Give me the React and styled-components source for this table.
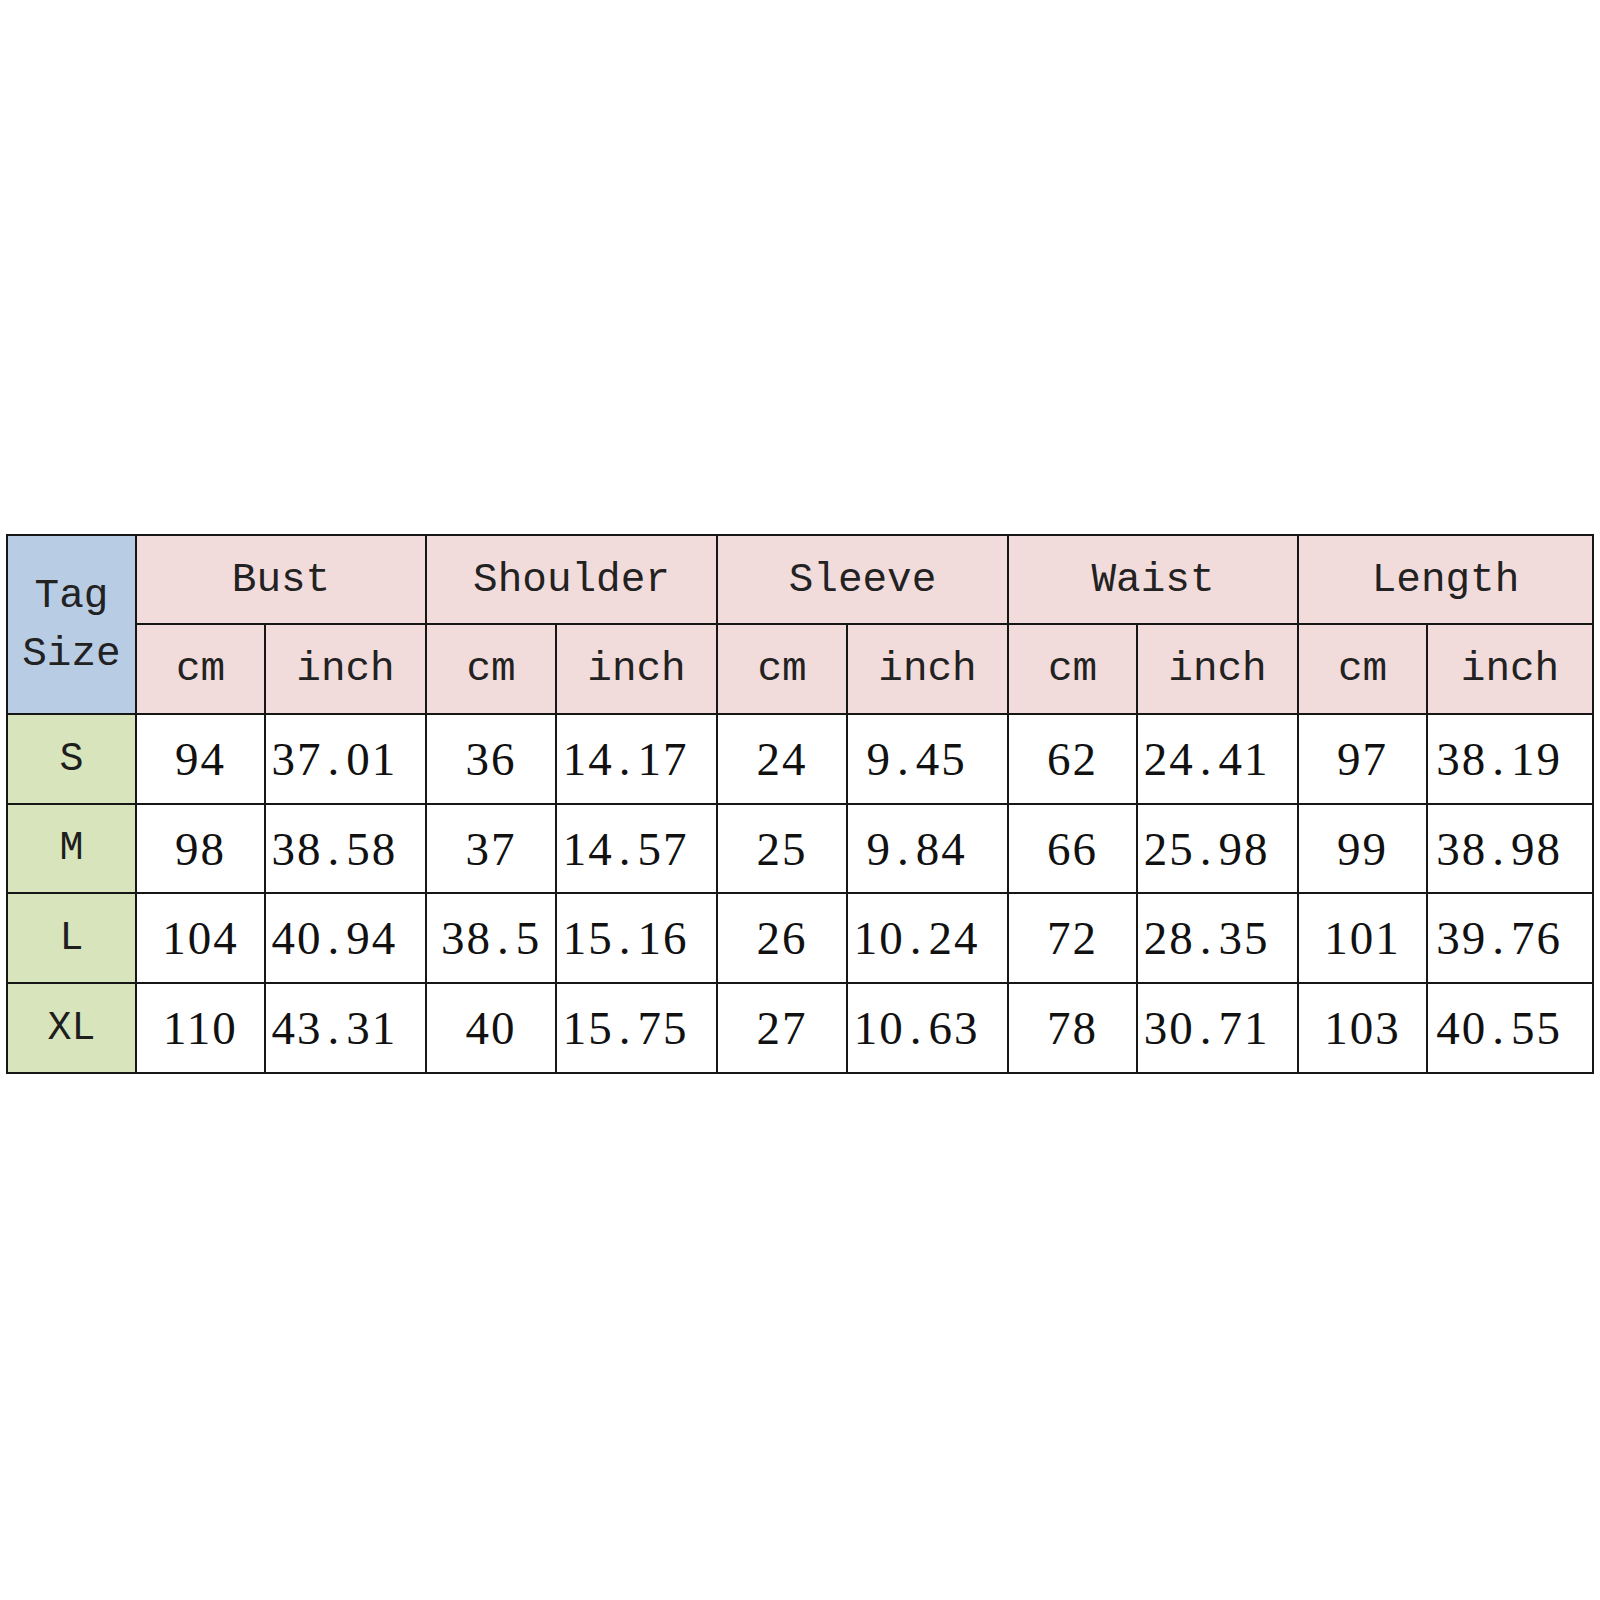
import React from 'react';
import styled, { createGlobalStyle } from 'styled-components';

const GlobalStyle = createGlobalStyle`
    html, body {
        margin: 0;
        padding: 0;
        background: #ffffff;
    }
`;

//Page wrapper, keeps the chart in the middle of the canvas
const ScPage = styled.div`
    width: 1600px;
    height: 1600px;
    box-sizing: border-box;
    padding-top: 8px;
    display: flex;
    align-items: center;
    justify-content: center;
    background: #ffffff;
`;

const ScTable = styled.table`
    width: 1586px;
    table-layout: fixed;
    border-collapse: collapse;
    border: 2px solid #161616;
`;

const ScRow = styled.tr`
    height: ${props => props.h}px;
`;

//Header cells (pink), Courier-like text
const ScHead = styled.th`
    border: 2px solid #161616;
    background: #f2dcdb;
    padding: 0;
    font-family: "Liberation Mono", "Courier New", monospace;
    font-weight: normal;
    font-size: 41px;
    color: #222222;
    text-align: center;
    vertical-align: middle;
`;

const ScTagHead = styled(ScHead)`
    background: #b8cce4;
    line-height: 58px;
`;

const ScSizeCell = styled.td`
    border: 2px solid #161616;
    background: #d8e4bc;
    padding: 0;
    font-family: "Liberation Mono", "Courier New", monospace;
    font-size: 40px;
    color: #1e1e1e;
    text-align: center;
    vertical-align: middle;
`;

const ScValueCell = styled.td`
    border: 2px solid #161616;
    background: #ffffff;
    padding: 0 ${props => (props.inch ? 22 : 0)}px 0 0;
    font-family: "Liberation Serif", "Times New Roman", serif;
    font-size: 47px;
    letter-spacing: 2px;
    color: #111111;
    text-align: center;
    vertical-align: middle;
    white-space: nowrap;
`;

//The decimal point sits with extra room on both sides
const ScDot = styled.span`
    margin: 0 5px;
`;

const groups = ['Bust', 'Shoulder', 'Sleeve', 'Waist', 'Length'];
const colWidths = [129, 129, 161, 130, 161, 130, 161, 129, 161, 129, 166];

const rows = [
    { size: 'S', h: 90, vals: ['94', '37.01', '36', '14.17', '24', '9.45', '62', '24.41', '97', '38.19'] },
    { size: 'M', h: 89, vals: ['98', '38.58', '37', '14.57', '25', '9.84', '66', '25.98', '99', '38.98'] },
    { size: 'L', h: 90, vals: ['104', '40.94', '38.5', '15.16', '26', '10.24', '72', '28.35', '101', '39.76'] },
    { size: 'XL', h: 90, vals: ['110', '43.31', '40', '15.75', '27', '10.63', '78', '30.71', '103', '40.55'] },
];

const Value = ({ v }) => {
    const [a, b] = v.split('.');
    if (b === undefined) return <>{a}</>;
    return <>{a}<ScDot>.</ScDot>{b}</>;
};

export default function App() {
    return (
        <ScPage>
            <GlobalStyle />
            <ScTable>
                <colgroup>
                    {colWidths.map((w, i) => <col key={i} style={{ width: w }} />)}
                </colgroup>
                <thead>
                    <ScRow h={89}>
                        <ScTagHead rowSpan={2}>Tag<br />Size</ScTagHead>
                        {groups.map(g => <ScHead key={g} colSpan={2}>{g}</ScHead>)}
                    </ScRow>
                    <ScRow h={90}>
                        {groups.map(g => (
                            <React.Fragment key={g}>
                                <ScHead>cm</ScHead>
                                <ScHead>inch</ScHead>
                            </React.Fragment>
                        ))}
                    </ScRow>
                </thead>
                <tbody>
                    {rows.map(r => (
                        <ScRow key={r.size} h={r.h}>
                            <ScSizeCell>{r.size}</ScSizeCell>
                            {r.vals.map((v, i) => (
                                <ScValueCell key={i} inch={i % 2 === 1}>
                                    <Value v={v} />
                                </ScValueCell>
                            ))}
                        </ScRow>
                    ))}
                </tbody>
            </ScTable>
        </ScPage>
    );
}
